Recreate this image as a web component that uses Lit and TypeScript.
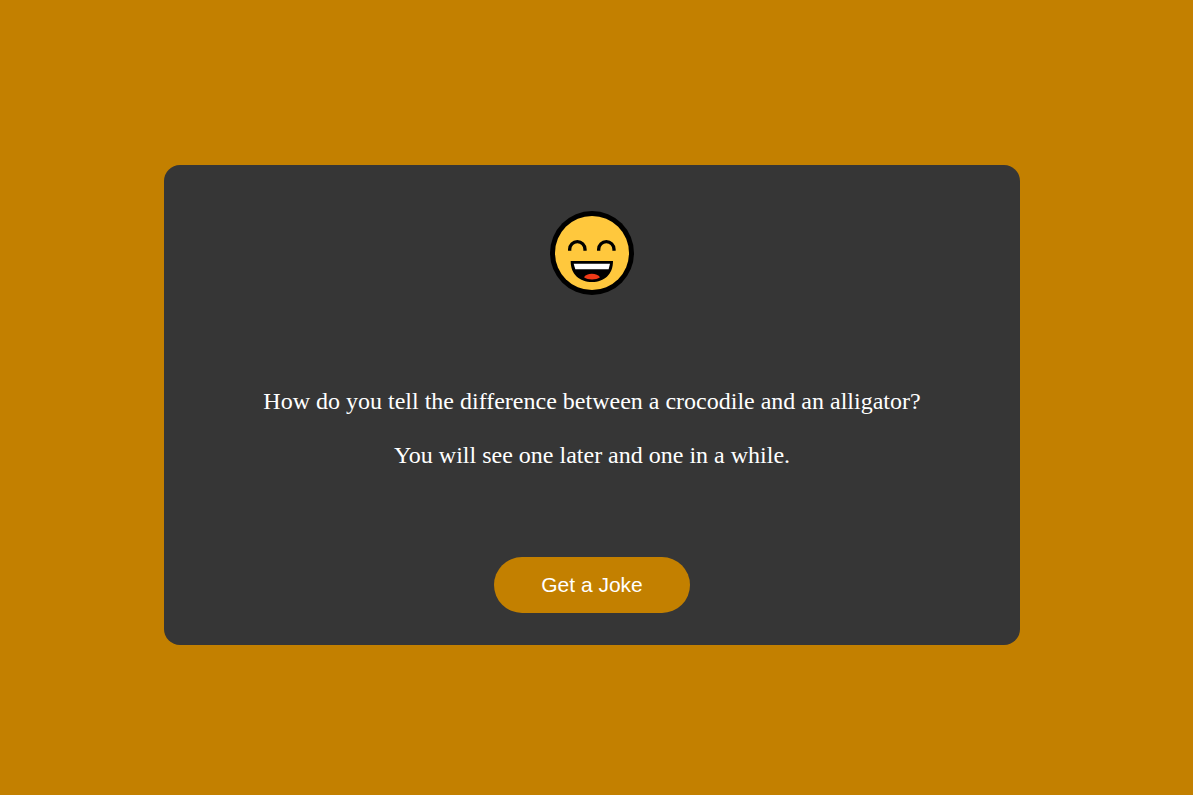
import { LitElement, html, css } from "lit";
import { customElement, state } from "lit/decorators.js";

interface Joke {
  setup: string;
  punchline: string;
}

const JOKES: Joke[] = [
  {
    setup: "How do you tell the difference between a crocodile and an alligator?",
    punchline: "You will see one later and one in a while.",
  },
];

@customElement("app-root")
export class AppRoot extends LitElement {
  static styles = css`
    :host {
      display: block;
    }
    .page {
      box-sizing: border-box;
      min-height: 100vh;
      padding: 15px 9px 0 0;
      display: flex;
      align-items: center;
      justify-content: center;
      background: #c38000;
    }
    .card {
      box-sizing: border-box;
      width: calc(70vw + 20px);
      padding: 46px 32px 32px;
      display: flex;
      flex-direction: column;
      align-items: center;
      border-radius: 16px;
      background: #363636;
      color: #fff;
    }
    .face {
      display: block;
      width: 84px;
      height: 84px;
    }
    .joke {
      margin: 79px 0 75px;
      font-family: "Liberation Serif", "Times New Roman", serif;
      font-size: 24px;
      line-height: 54px;
      text-align: center;
    }
    .line {
      margin: 0;
    }
    .button {
      padding: 16px 47px;
      border: 0;
      border-radius: 28px;
      background: #c38000;
      color: #fff;
      font-family: "Liberation Sans", Arial, sans-serif;
      font-size: 21px;
      line-height: 24px;
      cursor: pointer;
    }
  `;

  @state() private index = 0;

  private next() {
    this.index = (this.index + 1) % JOKES.length;
  }

  render() {
    const joke = JOKES[this.index];
    return html`
      <main class="page">
        <section class="card">
          <svg class="face" viewBox="30 32 252 252" aria-hidden="true">
            <circle cx="156" cy="158" r="126" fill="#000" />
            <circle cx="156" cy="158" r="111" fill="#ffc83d" />
            <path
              d="M89 151 V147 A23 23 0 0 1 135 147 V151 M176 151 V147 A23 23 0 0 1 222 147 V151"
              fill="none"
              stroke="#000"
              stroke-width="10"
            />
            <path d="M92 182 H219 C219 222 193 245 156 245 C118 245 92 222 92 182 Z" fill="#000" />
            <path d="M101 190 H210 L206 207 H106 Z" fill="#fff" />
            <path d="M132 231 C138 217 173 217 180 231 C168 240 144 240 132 231 Z" fill="#f03a17" />
          </svg>
          <div class="joke" aria-live="polite">
            <p class="line">${joke.setup}</p>
            <p class="line">${joke.punchline}</p>
          </div>
          <button class="button" type="button" @click=${this.next}>Get a Joke</button>
        </section>
      </main>
    `;
  }
}
